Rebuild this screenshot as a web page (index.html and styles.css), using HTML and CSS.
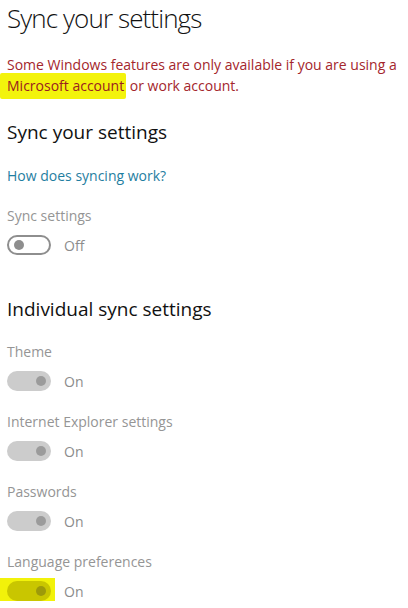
FILE: index.html
```html
<!DOCTYPE html>
<html lang="en">
<head>
  <meta charset="UTF-8" />
  <meta name="viewport" content="width=device-width, initial-scale=1.0" />
  <title>Sync your settings</title>
  <link rel="stylesheet" href="styles.css">
</head>
<body>
  <h1 class="page-title">Sync your settings</h1>
  <p class="notice">Some Windows features are only available if you are using a <mark class="marker">Microsoft account</mark> or work account.</p>

  <h2 class="section-title">Sync your settings</h2>
  <a class="help-link" href="#">How does syncing work?</a>

  <div class="setting first">
    <div class="setting-label">Sync settings</div>
    <div class="toggle-row">
      <span class="toggle off"><span class="knob"></span></span>
      <span class="state">Off</span>
    </div>
  </div>

  <h2 class="section-title individual">Individual sync settings</h2>

  <div class="settings-list">
    <div class="setting">
      <div class="setting-label">Theme</div>
      <div class="toggle-row">
        <span class="toggle on"><span class="knob"></span></span>
        <span class="state">On</span>
      </div>
    </div>
    <div class="setting">
      <div class="setting-label">Internet Explorer settings</div>
      <div class="toggle-row">
        <span class="toggle on"><span class="knob"></span></span>
        <span class="state">On</span>
      </div>
    </div>
    <div class="setting">
      <div class="setting-label">Passwords</div>
      <div class="toggle-row">
        <span class="toggle on"><span class="knob"></span></span>
        <span class="state">On</span>
      </div>
    </div>
    <div class="setting">
      <div class="setting-label">Language preferences</div>
      <div class="toggle-row">
        <span class="marker-box"><span class="toggle on marked"><span class="knob"></span></span></span>
        <span class="state">On</span>
      </div>
    </div>
  </div>
</body>
</html>
```

FILE: styles.css
```css
body {
  margin: 0;
  padding: 0 0 0 7px;
  font-family: "Open Sans", "Noto Sans", sans-serif;
  background-color: #ffffff;
  color: #111111;
}
.page-title {
  margin: 0;
  font-size: 26px;
  font-weight: 300;
  letter-spacing: -0.9px;
  line-height: 36px;
}
/* red warning text */
.notice {
  margin: 18px 0 0 0;
  font-size: 14px;
  line-height: 21px;
  color: #a4262c;
}
.marker {
  background-color: #f3f30c;
  color: #9a2020;
  padding: 3px 2px 4px 7px;
  margin-left: -7px;
  border-radius: 2px;
}
.section-title {
  margin: 22px 0 0 0;
  font-size: 19px;
  font-weight: 400;
  line-height: 28px;
}
.section-title.individual {
  margin-top: 40px;
}
.help-link {
  display: block;
  margin-top: 20px;
  font-size: 14px;
  line-height: 20px;
  color: #1f7ea1;
  text-decoration: none;
}
.setting.first {
  margin-top: 20px;
}
.settings-list {
  display: flex;
  flex-direction: column;
  gap: 21px;
  margin-top: 19px;
}
.setting-label {
  font-size: 14px;
  line-height: 20px;
  color: #959595;
}
.toggle-row {
  display: flex;
  align-items: center;
  gap: 13px;
  margin-top: 9px;
  height: 20px;
}
.state {
  font-size: 14px;
  color: #8c8c8c;
}
/* switch */
.toggle {
  box-sizing: border-box;
  width: 44px;
  height: 20px;
  border-radius: 10px;
  display: flex;
  align-items: center;
  padding: 0 5px;
}
.toggle .knob {
  width: 10px;
  height: 10px;
  border-radius: 50%;
}
.toggle.off {
  border: 2px solid #8e8e8e;
}
.toggle.off .knob {
  background-color: #8e8e8e;
}
.toggle.on {
  background-color: #cccccc;
  justify-content: flex-end;
}
.toggle.on .knob {
  background-color: #9b9b9b;
}
.marker-box {
  display: flex;
  background-color: #f2f20a;
  padding: 3px 4px 3px 7px;
  margin-left: -7px;
  margin-right: -4px;
}
.toggle.marked {
  background-color: #c9c600;
}
.toggle.marked .knob {
  background-color: #9d9a0a;
}
```
